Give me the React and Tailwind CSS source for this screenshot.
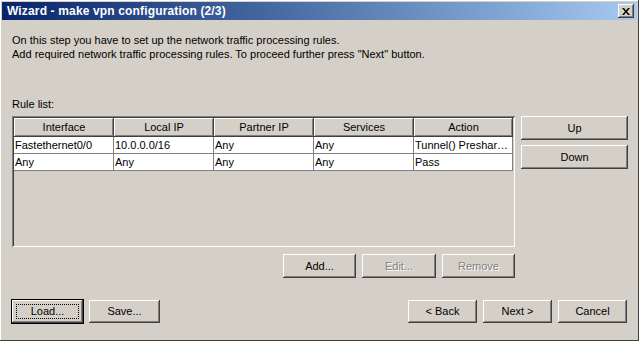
const raised =
  'bg-[#d4d0c8] shadow-[inset_-1px_-1px_#404040,inset_1px_1px_#ffffff,inset_-2px_-2px_#808080,inset_2px_2px_#d4d0c8]';

const Btn = ({ children, className = '', disabled, focused }) => (
  <button
    type="button"
    className={`relative flex items-center justify-center text-[11px] ${raised} ${
      disabled ? 'text-[#808080] [text-shadow:1px_1px_0_#ffffff]' : 'text-black'
    } ${focused ? 'outline outline-1 outline-black' : ''} ${className}`}
  >
    {focused && (
      <span className="absolute inset-[4px] border border-dotted border-black" />
    )}
    <span className="relative">{children}</span>
  </button>
);

const columns = ['Interface', 'Local IP', 'Partner IP', 'Services', 'Action'];
const rows = [
  ['Fastethernet0/0', '10.0.0.0/16', 'Any', 'Any', 'Tunnel() Preshar…'],
  ['Any', 'Any', 'Any', 'Any', 'Pass'],
];
const widths = ['w-[100px]', 'w-[100px]', 'w-[100px]', 'w-[100px]', 'w-[99px]'];

const App = () => {
  return (
    <div
      className="w-[639px] h-[341px] bg-[#d4d0c8] flex flex-col overflow-hidden shadow-[inset_-1px_-1px_#404040,inset_1px_1px_#ffffff]"
      style={{ fontFamily: '"Liberation Sans", Arial, sans-serif' }}
    >
      {/* title bar */}
      <div className="mx-[2px] mt-[2px] h-[18px] flex items-center justify-between pl-[5px] pr-[3px] bg-gradient-to-r from-[#0a246a] to-[#a6caf0]">
        <span className="text-white font-bold text-[12px] tracking-[0.15px] leading-none">
          Wizard - make vpn configuration (2/3)
        </span>
        <button
          type="button"
          className={`w-[16px] h-[14px] flex items-center justify-center ${raised}`}
          aria-label="Close"
        >
          <svg width="8" height="7" viewBox="0 0 8 7">
            <path d="M0 0h2l2 2.5L6 0h2L5 3.5 8 7H6L4 4.5 2 7H0l3-3.5z" fill="#000" />
          </svg>
        </button>
      </div>

      <div className="flex-1 flex flex-col px-[12px]">
        <div className="mt-[13px] text-[11px] leading-[14px] text-black">
          <p>On this step you have to set up the network traffic processing rules.</p>
          <p>Add required network traffic processing rules. To proceed further press "Next" button.</p>
        </div>

        <p className="mt-[36px] text-[11px] leading-[14px] text-black">Rule list:</p>

        <div className="mt-[5px] flex gap-[6px]">
          <div className="flex flex-col">
            <div className="w-[503px] h-[131px] p-[2px] bg-[#d4d0c8] shadow-[inset_1px_1px_#808080,inset_-1px_-1px_#ffffff,inset_2px_2px_#404040,inset_-2px_-2px_#d4d0c8]">
              <div className="flex">
                {columns.map((c, i) => (
                  <div
                    key={c}
                    className={`${widths[i]} h-[19px] flex items-center justify-center text-[11px] text-black ${raised}`}
                  >
                    {c}
                  </div>
                ))}
              </div>
              {rows.map((r, ri) => (
                <div key={ri} className="flex">
                  {r.map((cell, ci) => (
                    <div
                      key={ci}
                      className={`${widths[ci]} h-[17px] bg-white border-b border-r border-[#808080] flex items-center pl-[1px] text-[11px] text-black whitespace-nowrap overflow-hidden`}
                    >
                      {cell}
                    </div>
                  ))}
                </div>
              ))}
            </div>

            <div className="mt-[7px] flex justify-end gap-[6px]">
              <Btn className="w-[73px] h-[24px]">Add...</Btn>
              <Btn className="w-[74px] h-[24px]" disabled>
                Edit...
              </Btn>
              <Btn className="w-[73px] h-[24px]" disabled>
                Remove
              </Btn>
            </div>
          </div>

          <div className="flex flex-col gap-[5px]">
            <Btn className="w-[107px] h-[24px]">Up</Btn>
            <Btn className="w-[107px] h-[24px]">Down</Btn>
          </div>
        </div>

        <div className="mt-[22px] flex items-center">
          <Btn className="w-[71px] h-[23px]" focused>
            Load...
          </Btn>
          <Btn className="ml-[6px] w-[71px] h-[23px]">Save...</Btn>
          <div className="flex-1" />
          <Btn className="w-[69px] h-[23px]">&lt; Back</Btn>
          <Btn className="ml-[6px] w-[69px] h-[23px]">Next &gt;</Btn>
          <Btn className="ml-[6px] w-[69px] h-[23px]">Cancel</Btn>
        </div>
      </div>
    </div>
  );
};

export default App;
